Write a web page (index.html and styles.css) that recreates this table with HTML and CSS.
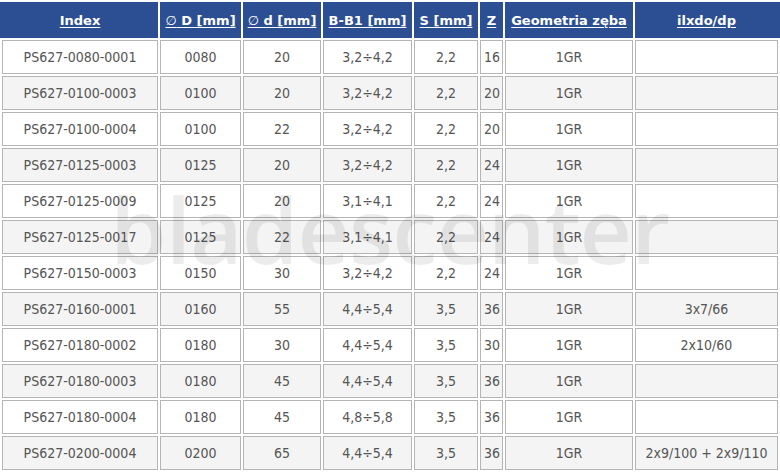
FILE: index.html
```html
<!DOCTYPE html>
<html lang="pl">
<head>
<meta charset="utf-8">
<title>PS627</title>
<link rel="stylesheet" href="styles.css">
</head>
<body>
<div class="wrap">
<table class="grid">
<thead>
<tr>
<th class="c-index"><a href="#">Index</a></th>
<th class="c-D"><a href="#"><span class="dia">∅</span> D [mm]</a></th>
<th class="c-d"><a href="#"><span class="dia">∅</span> d [mm]</a></th>
<th class="c-b"><a href="#">B-B1 [mm]</a></th>
<th class="c-s"><a href="#">S [mm]</a></th>
<th class="c-z"><a href="#">Z</a></th>
<th class="c-g"><a href="#">Geometria zęba</a></th>
<th class="c-i"><a href="#">ilxdo/dp</a></th>
</tr>
</thead>
<tbody>
<tr><td>PS627-0080-0001</td><td>0080</td><td>20</td><td>3,2÷4,2</td><td>2,2</td><td class="z">16</td><td>1GR</td><td></td></tr>
<tr><td>PS627-0100-0003</td><td>0100</td><td>20</td><td>3,2÷4,2</td><td>2,2</td><td class="z">20</td><td>1GR</td><td></td></tr>
<tr><td>PS627-0100-0004</td><td>0100</td><td>22</td><td>3,2÷4,2</td><td>2,2</td><td class="z">20</td><td>1GR</td><td></td></tr>
<tr><td>PS627-0125-0003</td><td>0125</td><td>20</td><td>3,2÷4,2</td><td>2,2</td><td class="z">24</td><td>1GR</td><td></td></tr>
<tr><td>PS627-0125-0009</td><td>0125</td><td>20</td><td>3,1÷4,1</td><td>2,2</td><td class="z">24</td><td>1GR</td><td></td></tr>
<tr><td>PS627-0125-0017</td><td>0125</td><td>22</td><td>3,1÷4,1</td><td>2,2</td><td class="z">24</td><td>1GR</td><td></td></tr>
<tr><td>PS627-0150-0003</td><td>0150</td><td>30</td><td>3,2÷4,2</td><td>2,2</td><td class="z">24</td><td>1GR</td><td></td></tr>
<tr><td>PS627-0160-0001</td><td>0160</td><td>55</td><td>4,4÷5,4</td><td>3,5</td><td class="z">36</td><td>1GR</td><td>3x7/66</td></tr>
<tr><td>PS627-0180-0002</td><td>0180</td><td>30</td><td>4,4÷5,4</td><td>3,5</td><td class="z">30</td><td>1GR</td><td>2x10/60</td></tr>
<tr><td>PS627-0180-0003</td><td>0180</td><td>45</td><td>4,4÷5,4</td><td>3,5</td><td class="z">36</td><td>1GR</td><td></td></tr>
<tr><td>PS627-0180-0004</td><td>0180</td><td>45</td><td>4,8÷5,8</td><td>3,5</td><td class="z">36</td><td>1GR</td><td></td></tr>
<tr><td>PS627-0200-0004</td><td>0200</td><td>65</td><td>4,4÷5,4</td><td>3,5</td><td class="z">36</td><td>1GR</td><td>2x9/100 + 2x9/110</td></tr>
</tbody>
</table>
<div class="watermark">bladescenter</div>
</div>
</body>
</html>
```
FILE: styles.css
```css
html, body {
  margin: 0;
  padding: 0;
  background: #ffffff;
}

.wrap {
  position: relative;
  width: 780px;
  overflow: hidden;
}

.grid {
  width: 780px;
  table-layout: fixed;
  border-collapse: separate;
  border-spacing: 2px;
  font-family: "DejaVu Sans Condensed", "DejaVu Sans", sans-serif;
  font-stretch: condensed;
  font-size: 14px;
  color: #555555;
}

.grid th {
  box-sizing: border-box;
  height: 36px;
  padding: 0;
  background: #2b4f92;
  text-align: center;
  vertical-align: middle;
  font-family: "DejaVu Sans", sans-serif;
  font-stretch: normal;
  font-weight: bold;
  font-size: 13px;
}

.grid th a {
  color: #ffffff;
  text-decoration: underline;
  text-underline-offset: 2px;
}

.grid th .dia {
  font-weight: normal;
}

.grid th:first-child {
  box-shadow: -2px 0 0 #2b4f92;
}

.grid th:last-child {
  box-shadow: 2px 0 0 #2b4f92;
}

.c-index { width: 156px; }
.c-D { width: 81px; }
.c-d { width: 78px; }
.c-b { width: 89px; }
.c-s { width: 64px; }
.c-z { width: 23px; }
.c-g { width: 128px; }
.c-i { width: 143px; }

.grid td {
  box-sizing: border-box;
  height: 34px;
  padding: 0;
  border: 1px solid #b5b5b5;
  background: #ffffff;
  text-align: center;
  vertical-align: middle;
  white-space: nowrap;
}

.grid td.z {
  text-align: left;
  padding-left: 3px;
}

.grid tbody tr:nth-child(even) td {
  background: #f4f4f4;
}

.watermark {
  position: absolute;
  left: 110px;
  top: 174px;
  font-family: "Open Sans", sans-serif;
  font-weight: 600;
  font-size: 91px;
  line-height: 110px;
  letter-spacing: -1px;
  color: rgba(0, 0, 0, 0.075);
  pointer-events: none;
  white-space: nowrap;
}
```
